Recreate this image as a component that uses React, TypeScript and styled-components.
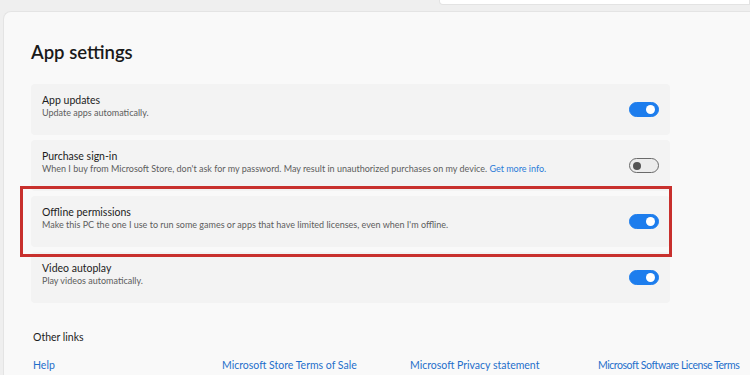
import { FunctionComponent, JSX } from 'react';
import styled, { createGlobalStyle } from 'styled-components';

const GlobalStyle = createGlobalStyle`
  html, body {
    margin: 0;
    padding: 0;
    background: #efefef;
    overflow: hidden;
  }
  body {
    font-family: 'Segoe UI', Lato, 'Noto Sans', sans-serif;
    color: #1b1b1b;
  }
`;

const Window = styled.div`
  width: 750px;
  height: 375px;
  display: flex;
  flex-direction: column;
  background: #efefef;
  overflow: hidden;
`;

const TopStrip = styled.div`
  height: 11px;
  display: flex;
  flex-shrink: 0;
`;

const SearchBox = styled.div`
  margin-left: 439px;
  flex: 1;
  height: 4px;
  background: #ffffff;
  border: 1px solid #e3e3e3;
  border-top: none;
  border-radius: 0 0 0 4px;
`;

const Panel = styled.div`
  flex: 1;
  margin-left: 3px;
  background: #f9f9f9;
  border-top: 1px solid #e4e4e4;
  border-left: 1px solid #e4e4e4;
  border-top-left-radius: 8px;
  padding: 0 0 0 27px;
  display: flex;
  flex-direction: column;
`;

const Heading = styled.h1`
  margin: 27px 0 19px 0;
  font-size: 18.5px;
  line-height: 26px;
  font-weight: 600;
  color: #1a1a1a;
`;

const CardList = styled.div`
  width: 639px;
  display: flex;
  flex-direction: column;
  gap: 5px;
`;

const Card = styled.div`
  position: relative;
  height: 51px;
  box-sizing: border-box;
  padding: 9px 11px 0 11px;
  background: #f3f3f3;
  border-radius: 4px;
  display: flex;
  align-items: flex-start;
  justify-content: space-between;
`;

const CardText = styled.div`
  display: flex;
  flex-direction: column;
`;

const CardTitle = styled.div`
  font-size: 10.5px;
  line-height: 14px;
  color: #1c1c1c;
`;

const CardSub = styled.div`
  font-size: 9px;
  line-height: 12px;
  color: #5d5d5d;
`;

const InlineLink = styled.span`
  color: #2a7bd8;
`;

const Toggle = styled.div<{ $on: boolean }>`
  align-self: center;
  margin-top: -9px;
  width: 30px;
  height: 15px;
  box-sizing: border-box;
  border-radius: 8px;
  display: flex;
  align-items: center;
  padding: 0 3px;
  justify-content: ${(p) => (p.$on ? 'flex-end' : 'flex-start')};
  background: ${(p) => (p.$on ? '#1d7ded' : '#ececec')};
  border: 1px solid ${(p) => (p.$on ? '#1d7ded' : '#6a6a6a')};
`;

const Knob = styled.div<{ $on: boolean }>`
  width: ${(p) => (p.$on ? 9 : 8)}px;
  height: ${(p) => (p.$on ? 9 : 8)}px;
  border-radius: 50%;
  background: ${(p) => (p.$on ? '#ffffff' : '#545454')};
`;

const Highlight = styled.div`
  position: absolute;
  z-index: 2;
  top: -10px;
  left: -11px;
  right: -2px;
  bottom: -10px;
  border: 3px solid #c8302d;
  pointer-events: none;
`;

const SectionLabel = styled.div`
  margin: 27px 0 0 2px;
  font-size: 10.5px;
  line-height: 14px;
  color: #1c1c1c;
`;

const LinkRow = styled.div`
  margin: 14px 0 0 2px;
  display: grid;
  grid-template-columns: 189px 188px 188px 152px;
`;

const FooterLink = styled.a<{ $tight?: boolean }>`
  font-size: 10.5px;
  line-height: 14px;
  letter-spacing: ${(p) => (p.$tight ? '-0.45px' : '0')};
  color: #1f6fcb;
  text-decoration: none;
  white-space: nowrap;
`;

interface Setting {
  title: string;
  sub: string;
  on: boolean;
  more?: boolean;
  highlight?: boolean;
}

const settings: Setting[] = [
  { title: 'App updates', sub: 'Update apps automatically.', on: true },
  {
    title: 'Purchase sign-in',
    sub: "When I buy from Microsoft Store, don't ask for my password. May result in unauthorized purchases on my device.",
    on: false,
    more: true,
  },
  {
    title: 'Offline permissions',
    sub: "Make this PC the one I use to run some games or apps that have limited licenses, even when I'm offline.",
    on: true,
    highlight: true,
  },
  { title: 'Video autoplay', sub: 'Play videos automatically.', on: true },
];

const links = ['Help', 'Microsoft Store Terms of Sale', 'Microsoft Privacy statement', 'Microsoft Software License Terms'];

const App: FunctionComponent = (): JSX.Element => {
  return (
    <Window>
      <GlobalStyle />
      <TopStrip>
        <SearchBox />
      </TopStrip>
      <Panel>
        <Heading>App settings</Heading>
        <CardList>
          {settings.map((s) => (
            <Card key={s.title}>
              <CardText>
                <CardTitle>{s.title}</CardTitle>
                <CardSub>
                  {s.sub}
                  {s.more && <InlineLink> Get more info.</InlineLink>}
                </CardSub>
              </CardText>
              <Toggle $on={s.on}>
                <Knob $on={s.on} />
              </Toggle>
              {s.highlight && <Highlight />}
            </Card>
          ))}
        </CardList>
        <SectionLabel>Other links</SectionLabel>
        <LinkRow>
          {links.map((l, i) => (
            <FooterLink key={l} href="#" $tight={i === links.length - 1}>
              {l}
            </FooterLink>
          ))}
        </LinkRow>
      </Panel>
    </Window>
  );
};

export default App;
